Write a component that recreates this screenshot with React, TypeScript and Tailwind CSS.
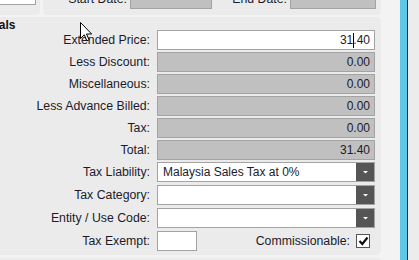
import type { ReactNode } from "react";

const font = { fontFamily: '"Liberation Sans", Arial, sans-serif' };

function Label({ children }: { children: ReactNode }) {
  return (
    <div className="w-[150px] shrink-0 text-right text-[12.3px] leading-[20px] text-[#1b1b2b]">
      {children}
    </div>
  );
}

function GrayBox({ value }: { value: string }) {
  return (
    <div className="w-[218px] h-[20px] bg-[#c0c0c0] border border-[#a3a3a3] text-right pr-[4px] text-[12px] leading-[18px] text-[#1b1b2b]">
      {value}
    </div>
  );
}

function Caret() {
  return (
    <svg width="7" height="8" viewBox="0 0 7 8" className="block">
      <path d="M1 3h5L3.5 5.5z" fill="#fff" />
    </svg>
  );
}

function Select({ value }: { value?: string }) {
  return (
    <div className="w-[218px] h-[20px] bg-white border border-[#a3a3a3] flex">
      <div className="flex-1 pl-[5px] text-[12px] leading-[18px] text-[#1b1b2b]">{value}</div>
      <div className="w-[18px] bg-[#555555] flex items-center justify-center">
        <Caret />
      </div>
    </div>
  );
}

function Row({ label, children, extra }: { label: string; children: ReactNode; extra?: string }) {
  return (
    <div className={`flex items-center gap-[7px] h-[20px] ${extra ?? ""}`}>
      <Label>{label}</Label>
      {children}
    </div>
  );
}

export default function App() {
  return (
    <div className="relative w-[419px] h-[260px] overflow-hidden bg-[#f3f3f3] flex" style={font}>
      <div className="w-[400px] shrink-0 flex flex-col">
        {/* previous section, cut off at the top */}
        <div className="h-[15px] flex gap-[3px] shrink-0">
          <div className="w-[40px] bg-[#ebebeb] rounded-br-[4px] relative">
            <div className="absolute left-[-4px] top-[-14px] w-[40px] h-[19px] bg-white border border-[#a3a3a3] text-right pr-[4px] text-[12px] leading-[17px] text-[#1b1b2b]">
              0.00
            </div>
          </div>
          <div className="w-[338px] bg-[#ebebeb] rounded-b-[4px] flex items-start -mt-[11px] h-[26px]">
            <div className="w-[84px] text-right text-[12.3px] leading-[20px] text-[#1b1b2b]">Start Date:</div>
            <div className="ml-[3px] w-[82px] h-[20px] bg-[#c0c0c0] border border-[#a3a3a3]" />
            <div className="w-[75px] text-right text-[12.3px] leading-[20px] text-[#1b1b2b]">End Date:</div>
            <div className="ml-[3px] w-[86px] h-[20px] bg-[#c0c0c0] border border-[#a3a3a3]" />
          </div>
        </div>

        {/* totals section */}
        <div className="mt-[2px] w-[381px] h-[238px] bg-[#ebebeb] rounded-r-[5px] flex flex-col">
          <div className="h-[13px] text-[12px] leading-[12px] font-bold text-[#111] -ml-[19px] mt-[2px]">Totals</div>
          <div className="mt-[-2px] flex flex-col gap-[2px]">
            <Row label="Extended Price:">
              <div className="w-[218px] h-[20px] bg-white border border-[#a3a3a3] text-right pr-[4px] text-[12px] leading-[18px] text-[#1b1b2b]">
                31
                <span className="relative">
                  .
                  <span className="absolute left-[0px] top-[0px] w-px h-[15px] bg-black" />
                </span>
                40
              </div>
            </Row>
            <Row label="Less Discount:">
              <GrayBox value="0.00" />
            </Row>
            <Row label="Miscellaneous:">
              <GrayBox value="0.00" />
            </Row>
            <Row label="Less Advance Billed:">
              <GrayBox value="0.00" />
            </Row>
            <Row label="Tax:">
              <GrayBox value="0.00" />
            </Row>
            <Row label="Total:">
              <GrayBox value="31.40" />
            </Row>
            <Row label="Tax Liability:">
              <Select value="Malaysia Sales Tax at 0%" />
            </Row>
            <Row label="Tax Category:" extra="mt-[1px]">
              <Select />
            </Row>
            <Row label="Entity / Use Code:" extra="mt-[1px]">
              <Select />
            </Row>
            <Row label="Tax Exempt:" extra="mt-[1px]">
              <div className="w-[40px] h-[20px] bg-white border border-[#a3a3a3]" />
              <div className="flex-1 flex items-center justify-end gap-[6px] pr-[11px]">
                <span className="text-[12.3px] leading-[20px] text-[#1b1b2b]">Commissionable:</span>
                <div className="w-[14px] h-[14px] bg-white border border-[#555] flex items-center justify-center">
                  <svg width="11" height="10" viewBox="0 0 11 10">
                    <path d="M1.5 5l2.8 3L9.5 1.5" fill="none" stroke="#111" strokeWidth="2.2" />
                  </svg>
                </div>
              </div>
            </Row>
          </div>
        </div>

        {/* next section */}
        <div className="mt-[3px] w-[381px] flex-1 bg-[#ebebeb] rounded-tr-[4px]" />
      </div>

      <div className="w-[7px] shrink-0 bg-[#5ec8e8]" />
      <div className="w-px shrink-0 bg-[#2a2a2a]" />
      <div className="flex-1 bg-[#ececec]" />

      {/* mouse pointer */}
      <svg className="absolute left-[80px] top-[22px]" width="13" height="20" viewBox="0 0 13 20">
        <path d="M0.5 0.5v16l3.8-3.7 2.6 6 2.2-1-2.6-5.8h5.2z" fill="#fff" stroke="#000" strokeWidth="1" />
      </svg>
    </div>
  );
}
